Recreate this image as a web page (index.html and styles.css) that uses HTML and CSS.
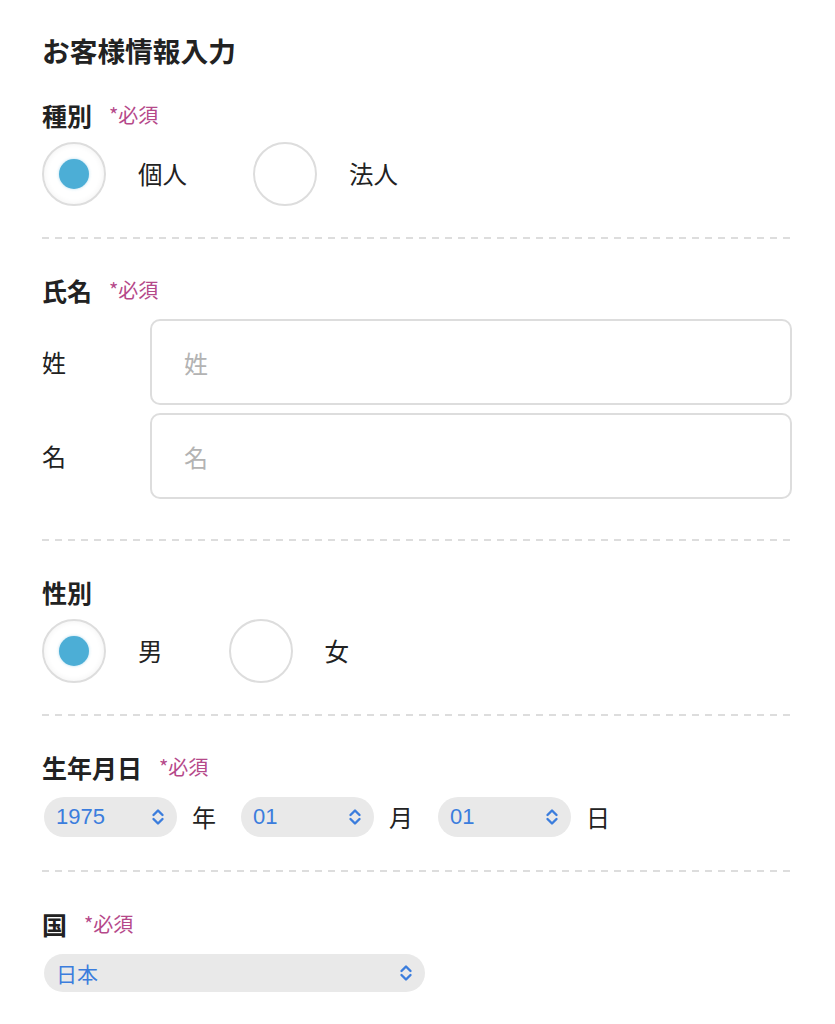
FILE: index.html
```html
<!DOCTYPE html>
<html lang="ja">
<head>
<meta charset="utf-8">
<title>お客様情報入力</title>
<link rel="stylesheet" href="styles.css">
</head>
<body>
<div class="page">
  <h1 class="title">お客様情報入力</h1>

  <section class="section section--first">
    <div class="label">種別<span class="req">*必須</span></div>
    <div class="radios">
      <div class="option"><span class="radio radio--on"><span class="dot"></span></span><span class="opt-text">個人</span></div>
      <div class="option"><span class="radio"></span><span class="opt-text">法人</span></div>
    </div>
  </section>
  <div class="divider"></div>

  <section class="section">
    <div class="label">氏名<span class="req">*必須</span></div>
    <div class="name-rows">
      <div class="name-row"><span class="name-label">姓</span><div class="input"><span class="placeholder">姓</span></div></div>
      <div class="name-row"><span class="name-label">名</span><div class="input"><span class="placeholder">名</span></div></div>
    </div>
  </section>
  <div class="divider divider--wide"></div>

  <section class="section">
    <div class="label">性別</div>
    <div class="radios">
      <div class="option"><span class="radio radio--on"><span class="dot"></span></span><span class="opt-text">男</span></div>
      <div class="option"><span class="radio"></span><span class="opt-text">女</span></div>
    </div>
  </section>
  <div class="divider"></div>

  <section class="section">
    <div class="label">生年月日<span class="req">*必須</span></div>
    <div class="date-row">
      <div class="select select--small"><span class="sel-text">1975</span><svg class="chev" viewBox="0 0 14 18" width="14" height="18"><path d="M2.5 7 L7 2.5 L11.5 7 M2.5 11 L7 15.5 L11.5 11" fill="none" stroke="#3b7ddd" stroke-width="2.4" stroke-linecap="round" stroke-linejoin="round"/></svg></div>
      <span class="unit">年</span>
      <div class="select select--small"><span class="sel-text">01</span><svg class="chev" viewBox="0 0 14 18" width="14" height="18"><path d="M2.5 7 L7 2.5 L11.5 7 M2.5 11 L7 15.5 L11.5 11" fill="none" stroke="#3b7ddd" stroke-width="2.4" stroke-linecap="round" stroke-linejoin="round"/></svg></div>
      <span class="unit">月</span>
      <div class="select select--small"><span class="sel-text">01</span><svg class="chev" viewBox="0 0 14 18" width="14" height="18"><path d="M2.5 7 L7 2.5 L11.5 7 M2.5 11 L7 15.5 L11.5 11" fill="none" stroke="#3b7ddd" stroke-width="2.4" stroke-linecap="round" stroke-linejoin="round"/></svg></div>
      <span class="unit">日</span>
    </div>
  </section>
  <div class="divider divider--mid"></div>

  <section class="section section--last">
    <div class="label">国<span class="req">*必須</span></div>
    <div class="select select--wide"><span class="sel-text">日本</span><svg class="chev" viewBox="0 0 14 18" width="14" height="18"><path d="M2.5 7 L7 2.5 L11.5 7 M2.5 11 L7 15.5 L11.5 11" fill="none" stroke="#3b7ddd" stroke-width="2.4" stroke-linecap="round" stroke-linejoin="round"/></svg></div>
  </section>
</div>
</body>
</html>
```

FILE: styles.css
```css
html, body {
  margin: 0;
  padding: 0;
  background: #ffffff;
}

body {
  font-family: "Noto Sans CJK JP", "Noto Sans", sans-serif;
  color: #222222;
}

.page {
  padding: 32px 43px 0 42px;
}

.title {
  margin: 0;
  font-size: 27.7px;
  line-height: 36px;
  font-weight: 700;
  color: #222222;
}

.section {
  padding-top: 35px;
}

.section--first {
  padding-top: 31px;
}

.label {
  font-size: 25px;
  line-height: 32px;
  font-weight: 700;
  color: #222222;
  display: flex;
  align-items: center;
}

.req {
  font-size: 20px;
  font-weight: 400;
  color: #b5498a;
  margin-left: 17px;
}

.radios {
  display: flex;
  align-items: center;
  margin-top: 11px;
}

.option {
  display: flex;
  align-items: center;
  margin-right: 66px;
}

.radio {
  flex-shrink: 0;
  width: 64px;
  height: 64px;
  box-sizing: border-box;
  border: 2px solid #dddddd;
  border-radius: 50%;
  background: #ffffff;
  display: flex;
  align-items: center;
  justify-content: center;
}

.radio--on {
  box-shadow: inset 0 0 6px rgba(0, 0, 0, 0.06);
}

.dot {
  width: 30px;
  height: 30px;
  border-radius: 50%;
  background: #4caed6;
  box-shadow: 0 0 3px rgba(76, 174, 214, 0.45);
}

.opt-text {
  margin-left: 32px;
  font-size: 24.5px;
  line-height: 32px;
  color: #222222;
}

.divider {
  height: 2px;
  margin-top: 31px;
  background-image: linear-gradient(to right, #dddddd 0, #dddddd 7px, transparent 7px);
  background-size: 13px 2px;
  background-repeat: repeat-x;
}

.divider--wide {
  margin-top: 40px;
}

.divider--mid {
  margin-top: 33px;
}

.name-rows {
  margin-top: 13px;
  display: flex;
  flex-direction: column;
  gap: 8px;
}

.name-row {
  display: flex;
  align-items: center;
}

.name-label {
  width: 108px;
  font-size: 24px;
  line-height: 32px;
  color: #222222;
}

.input {
  flex: 1;
  height: 86px;
  box-sizing: border-box;
  border: 2px solid #dddddd;
  border-radius: 10px;
  display: flex;
  align-items: center;
  padding-left: 32px;
}

.placeholder {
  font-size: 24px;
  color: #b3b3b3;
}

.date-row {
  display: flex;
  align-items: center;
  margin-top: 14px;
  padding-left: 2px;
}

.select {
  display: flex;
  align-items: center;
  justify-content: space-between;
  box-sizing: border-box;
  background: #e9e9e9;
  border-radius: 20px;
  padding: 0 12px 0 12px;
}

.select--small {
  width: 133px;
  height: 40px;
}

.select--wide {
  width: 381px;
  height: 38px;
  margin-top: 14px;
  margin-left: 2px;
}

.sel-text {
  font-family: "Liberation Sans", "Noto Sans CJK JP", sans-serif;
  font-size: 22px;
  color: #3b7ddd;
}

.select--wide .sel-text {
  font-family: "Noto Sans CJK JP", sans-serif;
  font-size: 21px;
}

.chev {
  display: block;
  flex-shrink: 0;
  width: 14px;
  height: 18px;
}

.unit {
  font-size: 24px;
  line-height: 32px;
  color: #222222;
  margin-left: 15px;
  margin-right: 25px;
}

.section--last {
  padding-top: 36px;
  padding-bottom: 30px;
}
```
